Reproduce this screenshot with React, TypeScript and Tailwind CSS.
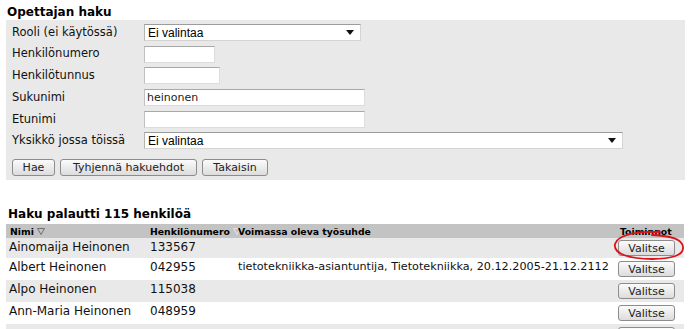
const verdana = "font-['DejaVu_Sans',Verdana,sans-serif]";

interface FieldRowProps {
    label: string;
    children: React.ReactNode;
};

const FieldRow = (props: FieldRowProps) => {
    const { label, children } = props;

    return (
        <div className="flex h-[17px] items-center">
            <div className="w-[138px] shrink-0 pl-[6px] text-[11.5px] leading-none text-[#111]">
                {label}
            </div>
            {children}
        </div>
    );
};

const SelectBox = ({ width }: { width: string }) => {
    return (
        <div className={`flex h-[17px] ${width} items-center justify-between border border-[#d4d4d4] border-t-[#9c9c9c] border-l-[#b4b4b4] bg-white pl-[3px] pr-[6px]`}>
            <span className="font-['Liberation_Sans',Arial,sans-serif] text-[12px] leading-none text-black">
                Ei valintaa
            </span>
            <svg width="8" height="5" viewBox="0 0 8 5">
                <path d="M0 0 H8 L4 5 Z" fill="#111" />
            </svg>
        </div>
    );
};

const TextBox = ({ width, value }: { width: string; value?: string }) => {
    return (
        <div className={`flex h-[17px] ${width} items-center border border-[#dcdcdc] border-t-[#a8a8a8] border-l-[#c0c0c0] bg-white pl-[2px] text-[11px] leading-none text-[#222]`}>
            {value}
        </div>
    );
};

const Button = ({ children, className }: { children?: React.ReactNode; className?: string }) => {
    return (
        <div className={`flex items-center justify-center rounded-[3px] border border-[#8c8c8c] bg-gradient-to-b from-[#fbfbfb] to-[#dcdcdc] text-[11px] leading-none text-[#222] ${className ?? ""}`}>
            {children}
        </div>
    );
};

const SortIcon = ({ color }: { color: string }) => {
    return (
        <svg width="8" height="7" viewBox="0 0 8 7" className="ml-[3px] shrink-0">
            <path d="M0.5 0.5 H7.5 L4 6.5 Z" fill="none" stroke={color} strokeWidth="1" />
        </svg>
    );
};

const people = [
    { name: "Ainomaija Heinonen", id: "133567", job: "", bg: "bg-[#e9e9e9]", h: "h-[20px]" },
    { name: "Albert Heinonen", id: "042955", job: "tietotekniikka-asiantuntija, Tietotekniikka, 20.12.2005-21.12.2112", bg: "bg-white", h: "h-[22px]" },
    { name: "Alpo Heinonen", id: "115038", job: "", bg: "bg-[#e9e9e9]", h: "h-[22px]" },
    { name: "Ann-Maria Heinonen", id: "048959", job: "", bg: "bg-white", h: "h-[22px]" },
];

export default function App() {
    return (
        <div className={`relative h-[329px] w-[694px] overflow-hidden bg-white ${verdana}`}>
            <h1 className="mt-[5px] pl-[7px] text-[12px] font-bold leading-[15px] text-black">
                Opettajan haku
            </h1>

            <div className="ml-[6px] w-[679px] bg-[#e9e9e9] pb-[4px] pt-[4px]">
                <div className="flex flex-col gap-[4.7px]">
                    <FieldRow label="Rooli (ei käytössä)">
                        <SelectBox width="w-[217px]" />
                    </FieldRow>
                    <FieldRow label="Henkilönumero">
                        <TextBox width="w-[71px]" />
                    </FieldRow>
                    <FieldRow label="Henkilötunnus">
                        <TextBox width="w-[76px]" />
                    </FieldRow>
                    <FieldRow label="Sukunimi">
                        <TextBox width="w-[221px]" value="heinonen" />
                    </FieldRow>
                    <FieldRow label="Etunimi">
                        <TextBox width="w-[221px]" />
                    </FieldRow>
                    <FieldRow label="Yksikkö jossa töissä">
                        <SelectBox width="w-[479px]" />
                    </FieldRow>
                </div>

                <div className="mt-[10px] flex gap-[5px] pl-[6px]">
                    <Button className="h-[17px] w-[43px]">Hae</Button>
                    <Button className="h-[17px] w-[137px]">Tyhjennä hakuehdot</Button>
                    <Button className="h-[17px] w-[66px]">Takaisin</Button>
                </div>
            </div>

            <h2 className="mt-[27px] pl-[8px] text-[12px] font-bold leading-[15px] text-black">
                Haku palautti 115 henkilöä
            </h2>

            <div className="ml-[6px] mt-[2px] w-[678px]">
                <div className="flex h-[14px] items-center bg-[#c3c3c3] text-[9.3px] font-bold leading-none text-black">
                    <div className="flex w-[139px] items-center pl-[4px]">
                        Nimi
                        <SortIcon color="#6e6e6e" />
                    </div>
                    <div className="flex w-[93px] items-center pl-[5px]">
                        Henkilönumero
                        <SortIcon color="#e4e4e4" />
                    </div>
                    <div className="flex-1">Voimassa oleva työsuhde</div>
                    <div className="w-[66px] pl-[2px]">Toiminnot</div>
                </div>

                {people.map((p, i) => (
                    <div key={i} className={`flex items-center ${p.bg} ${p.h} text-[12px] leading-[16px] text-[#111]`}>
                        <div className="w-[139px] self-start pl-[3px] pt-[1px]">{p.name}</div>
                        <div className="w-[87px] self-start pl-[5px] pt-[1px]">{p.id}</div>
                        <div className="flex-1 self-start whitespace-nowrap pl-[6px] pt-[1px] text-[11.2px]">{p.job}</div>
                        <div className="w-[66px]">
                            <Button className="h-[16px] w-[57px]">Valitse</Button>
                        </div>
                    </div>
                ))}

                <div className="flex h-[22px] items-start bg-[#e9e9e9]">
                    <div className="flex-1" />
                    <div className="w-[66px] pt-[3px]">
                        <Button className="h-[16px] w-[57px]" />
                    </div>
                </div>
            </div>

            <svg className="pointer-events-none absolute left-0 top-0" width="694" height="329" viewBox="0 0 694 329">
                <path
                    d="M657 232 C640 231 618 234 615 244 C613 254 630 259 652 259 C672 259 684 255 683 247 C682 239 672 236 652 235"
                    fill="none"
                    stroke="#d9141c"
                    strokeWidth="1.8"
                    strokeLinecap="round"
                />
                <path d="M652 232 L660 230 L661 233 Z" fill="#d9141c" />
            </svg>
        </div>
    );
}
